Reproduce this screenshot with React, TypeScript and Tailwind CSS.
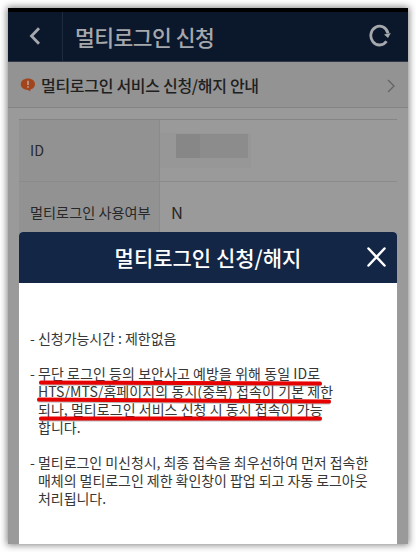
import type { ReactNode } from 'react';

interface RowProps {
  label: string;
  children: ReactNode;
}

function InfoRow({ label, children }: RowProps) {
  return (
    <div className="flex h-[62px] border-b border-[#8b8b8b]">
      <div className="flex w-[141px] items-center border-r border-[#8b8b8b] bg-[#929292] pl-[11px] text-[14.2px] whitespace-nowrap text-[#282828]">
        {label}
      </div>
      <div className="flex flex-1 items-center text-[#282828]">{children}</div>
    </div>
  );
}

function Header() {
  return (
    <header className="flex h-[54px] items-stretch border-t-4 border-b border-t-black border-b-[#303848] bg-[#0b172b]">
      <button className="flex w-[55px] items-center justify-center border-r border-[#1d2a40]" aria-label="뒤로">
        <svg width="12" height="18" viewBox="0 0 12 18" fill="none" stroke="#a5a8ac" strokeWidth="2.8" className="mb-0.5">
          <path d="M10 1.2 2.5 9l7.5 7.8" />
        </svg>
      </button>
      <h1 className="flex-1 pt-px pl-3 text-[21.5px] leading-[48px] font-medium tracking-[-0.5px] whitespace-nowrap text-[#a5a8ac]">
        멀티로그인 신청
      </h1>
      <button className="mr-[17px] flex items-center" aria-label="새로고침">
        <svg width="22" height="24" viewBox="0 0 22 24" fill="none" className="mb-px">
          <path d="M17.5 17.2A8.7 9.4 0 1 1 19 9.5" stroke="#a5a8ac" strokeWidth="2.8" />
          <path d="M15 10.5 21.8 9l-2.8 5z" fill="#a5a8ac" />
        </svg>
      </button>
    </header>
  );
}

function Notice() {
  return (
    <div className="flex h-[46px] items-center border-b border-[#848484] bg-[#939393] pr-[13px] pl-3">
      <svg width="16" height="14" viewBox="0 0 16 14" className="mt-px shrink-0">
        <path d="M8 .5C3.8.5.8 2.9.8 6.2s3 5.7 7.2 5.7l2.2 1.6.3-2c2.8-.9 4.5-2.8 4.5-5.3C15 2.9 12.2.5 8 .5z" fill="#a2451d" />
        <path d="M8 2.7v4.2M8 8.2v1.5" stroke="#b9aaa3" strokeWidth="1.5" />
      </svg>
      <span className="ml-[5px] flex-1 text-[16px] font-medium tracking-[-0.3px] whitespace-nowrap text-[#202020]">
        멀티로그인 서비스 신청/해지 안내
      </span>
      <svg width="8" height="14" viewBox="0 0 8 14" fill="none" stroke="#656565" strokeWidth="1.4" className="mt-[3px]">
        <path d="m1 1 6 6-6 6" />
      </svg>
    </div>
  );
}

function Modal() {
  return (
    <section className="absolute top-[224px] right-[11px] bottom-0 left-[11px] overflow-hidden rounded-t-[4px] bg-white">
      <div className="relative flex h-[51px] items-center justify-center bg-[#142646]">
        <h2 className="text-[21px] font-medium whitespace-nowrap text-white">멀티로그인 신청/해지</h2>
        <button className="absolute top-[15px] right-[11px]" aria-label="닫기">
          <svg width="19" height="20" viewBox="0 0 19 20" fill="none" stroke="#fff" strokeWidth="2.5" strokeLinecap="round">
            <path d="m1.5 1.5 16 17M17.5 1.5l-16 17" />
          </svg>
        </button>
      </div>
      <div className="flex flex-col gap-[17px] pt-[46px] pl-[11px] text-[14px] leading-[18px] whitespace-nowrap text-[#363636]">
        <div className="flex">
          <span className="w-2">-</span>
          <p className="tracking-[-0.05px]">신청가능시간 : 제한없음</p>
        </div>
        <div className="relative flex">
          <span className="w-2">-</span>
          <p>
            <span className="tracking-[0.06px]">무단 로그인 등의 보안사고 예방을 위해 동일 ID로</span>
            <br />
            <span className="tracking-[0.08px]">HTS/MTS/홈페이지의 동시(중복) 접속이 기본 제한</span>
            <br />
            <span className="tracking-[0.04px]">되나, 멀티로그인 서비스 신청 시 동시 접속이 가능</span>
            <br />
            합니다.
          </p>
          <svg
            width="306"
            height="72"
            viewBox="0 0 306 72"
            fill="none"
            strokeLinecap="round"
            className="absolute top-0.5 left-0"
          >
            <path d="M11 17.6 290 18.6M9 34.6l290 2M11 53.4h279" stroke="#777" strokeWidth="4" strokeOpacity=".5" />
            <path d="M11 16.6 290 17.6M9 33.6l290 2M11 52.4h279" stroke="#e60000" strokeWidth="4" />
          </svg>
        </div>
        <div className="flex">
          <span className="w-2">-</span>
          <p className="tracking-[-0.05px]">
            멀티로그인 미신청시, 최종 접속을 최우선하여 먼저 접속한
            <br />
            매체의 멀티로그인 제한 확인창이 팝업 되고 자동 로그아웃
            <br />
            처리됩니다.
          </p>
        </div>
      </div>
    </section>
  );
}

export default function App() {
  return (
    <div className="h-[552px] w-[416px] bg-white p-2 font-['Noto_Sans_CJK_KR',sans-serif]">
      <main className="relative h-[536px] bg-[#9a9a9a] shadow-[0_0_7px_1px_rgba(0,0,0,0.5)]">
        <Header />
        <Notice />
        <div className="mx-[11px] mt-[11px] border-t border-[#858585]">
          <InfoRow label="ID">
            <div className="flex h-[35px] w-[91px] items-start bg-[#979797]">
              <div className="mt-px ml-4 h-6 w-6 bg-[#878787]" />
              <div className="mt-px h-6 w-12 bg-[#8c8c8c]" />
            </div>
          </InfoRow>
          <InfoRow label="멀티로그인 사용여부">
            <span className="pl-[11px] text-[16.5px] leading-none">N</span>
          </InfoRow>
        </div>
        <Modal />
      </main>
    </div>
  );
}
